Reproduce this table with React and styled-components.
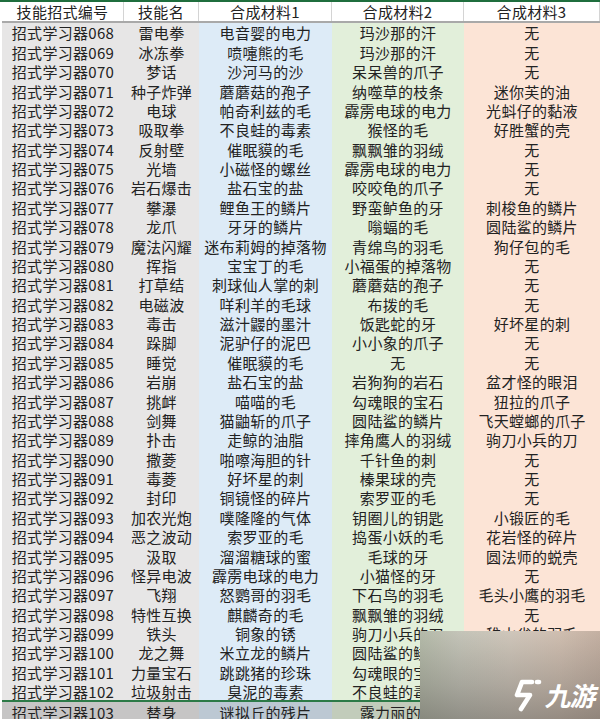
import React from 'react';
import styled, { createGlobalStyle } from 'styled-components';

const GlobalStyle = createGlobalStyle`
  html, body {
    margin: 0;
    padding: 0;
    background: #fff;
    overflow: hidden;
  }
  body {
    font-family: "Noto Sans CJK SC", "Noto Sans", sans-serif;
    color: #222;
  }
`;

const tones = {
  gray: '#e7e6e6',
  blue: '#ddebf7',
  green: '#e2efda',
  peach: '#fce4d6',
};

const selectedTones = {
  gray: '#c6c5c5',
  blue: '#bcc8d3',
  green: '#c2ccbb',
  peach: '#d6c3b8',
};

const Page = styled.div`
  position: relative;
  width: 600px;
  height: 719px;
  overflow: hidden;
  border-top: 2px solid #1f6e3d;
  box-sizing: border-box;
`;

const Sheet = styled.div`
  display: flex;
  flex-direction: column;
  border-left: 2px solid #fff;
  box-shadow: inset 1px 0 0 #b9b9b9;
`;

const Row = styled.div`
  display: grid;
  grid-template-columns: 122px 75px 133px 132px 136px;
  height: ${(p) => (p.$header ? '19.3px' : '19.38px')};
  ${(p) => p.$header && 'border-bottom: 2px solid #a9a9a9;'}
  ${(p) =>
    p.$selected &&
    'border-top: 2px solid #2c7a47; box-shadow: inset 0 1px 0 #fff; margin-top: -1px;'}
`;

const Cell = styled.div`
  display: flex;
  align-items: center;
  justify-content: center;
  white-space: nowrap;
  overflow: hidden;
  font-size: 15px;
  line-height: 1;
  letter-spacing: 0.3px;
  background: ${(p) =>
    p.$header ? '#fff' : p.$selected ? selectedTones[p.$tone] : tones[p.$tone]};
  ${(p) => p.$header && 'border-right: 1px solid #d4d4d4;'}
`;

const Watermark = styled.div`
  position: absolute;
  left: 420px;
  top: 629px;
  width: 180px;
  height: 90px;
  z-index: 2;
  background: linear-gradient(90deg, #b4baa9 0%, #c4c4b8 22%, #cfc6ba 50%, #cfbeb0 78%, #c4b0a2 100%);
  display: flex;
  align-items: flex-end;
  justify-content: flex-end;
  padding: 0 3px 8px 0;
  box-sizing: border-box;
`;

const Shade = styled.div`
  position: absolute;
  inset: 0;
  background: linear-gradient(180deg, rgba(100, 97, 92, 0) 0%, rgba(100, 97, 92, 0.3) 60%, rgba(90, 87, 82, 0.5) 100%);
`;

const Logo = styled.div`
  position: relative;
  display: flex;
  align-items: center;
  gap: 2px;
  color: #fff;
`;

const LogoText = styled.span`
  font-family: "Noto Sans CJK SC", sans-serif;
  font-size: 26px;
  font-weight: 700;
  letter-spacing: -1px;
  color: #fff;
  transform: skewX(-12deg);
`;

const headers = ['技能招式编号', '技能名', '合成材料1', '合成材料2', '合成材料3'];
const toneOrder = ['gray', 'gray', 'blue', 'green', 'peach'];

const rows = [
  ['068', '雷电拳', '电音婴的电力', '玛沙那的汗', '无'],
  ['069', '冰冻拳', '喷嚏熊的毛', '玛沙那的汗', '无'],
  ['070', '梦话', '沙河马的沙', '呆呆兽的爪子', '无'],
  ['071', '种子炸弹', '蘑蘑菇的孢子', '纳噬草的枝条', '迷你芙的油'],
  ['072', '电球', '帕奇利兹的毛', '霹雳电球的电力', '光蚪仔的黏液'],
  ['073', '吸取拳', '不良蛙的毒素', '猴怪的毛', '好胜蟹的壳'],
  ['074', '反射壁', '催眠貘的毛', '飘飘雏的羽绒', '无'],
  ['075', '光墙', '小磁怪的螺丝', '霹雳电球的电力', '无'],
  ['076', '岩石爆击', '盐石宝的盐', '咬咬龟的爪子', '无'],
  ['077', '攀瀑', '鲤鱼王的鳞片', '野蛮鲈鱼的牙', '刺梭鱼的鳞片'],
  ['078', '龙爪', '牙牙的鳞片', '嗡蝠的毛', '圆陆鲨的鳞片'],
  ['079', '魔法闪耀', '迷布莉姆的掉落物', '青绵鸟的羽毛', '狗仔包的毛'],
  ['080', '挥指', '宝宝丁的毛', '小福蛋的掉落物', '无'],
  ['081', '打草结', '刺球仙人掌的刺', '蘑蘑菇的孢子', '无'],
  ['082', '电磁波', '咩利羊的毛球', '布拨的毛', '无'],
  ['083', '毒击', '滋汁鼹的墨汁', '饭匙蛇的牙', '好坏星的刺'],
  ['084', '跺脚', '泥驴仔的泥巴', '小小象的爪子', '无'],
  ['085', '睡觉', '催眠貘的毛', '无', '无'],
  ['086', '岩崩', '盐石宝的盐', '岩狗狗的岩石', '盆才怪的眼泪'],
  ['087', '挑衅', '喵喵的毛', '勾魂眼的宝石', '狃拉的爪子'],
  ['088', '剑舞', '猫鼬斩的爪子', '圆陆鲨的鳞片', '飞天螳螂的爪子'],
  ['089', '扑击', '走鲸的油脂', '摔角鹰人的羽绒', '驹刀小兵的刀'],
  ['090', '撒菱', '啪嚓海胆的针', '千针鱼的刺', '无'],
  ['091', '毒菱', '好坏星的刺', '榛果球的壳', '无'],
  ['092', '封印', '铜镜怪的碎片', '索罗亚的毛', '无'],
  ['093', '加农光炮', '噗隆隆的气体', '钥圈儿的钥匙', '小锻匠的毛'],
  ['094', '恶之波动', '索罗亚的毛', '捣蛋小妖的毛', '花岩怪的碎片'],
  ['095', '汲取', '溜溜糖球的蜜', '毛球的牙', '圆法师的蜕壳'],
  ['096', '怪异电波', '霹雳电球的电力', '小猫怪的牙', '无'],
  ['097', '飞翔', '怒鹦哥的羽毛', '下石鸟的羽毛', '毛头小鹰的羽毛'],
  ['098', '特性互换', '麒麟奇的毛', '飘飘雏的羽绒', '无'],
  ['099', '铁头', '铜象的锈', '驹刀小兵的刀', '稚山雀的羽毛'],
  ['100', '龙之舞', '米立龙的鳞片', '圆陆鲨的鳞片', '无'],
  ['101', '力量宝石', '跳跳猪的珍珠', '勾魂眼的宝石', '无'],
  ['102', '垃圾射击', '臭泥的毒素', '不良蛙的毒素', '无'],
  ['103', '替身', '谜拟丘的残片', '露力丽的毛', '无'],
];

const NineLogo = () => (
  <svg width="36" height="34" viewBox="0 0 36 34" fill="none">
    <path
      d="M23 4 L13 4 L8 17 L21 17 L12 31"
      stroke="#fff"
      strokeWidth="4.6"
      strokeLinecap="round"
      strokeLinejoin="round"
    />
    <path d="M28 4 L30 4" stroke="#fff" strokeWidth="4.6" strokeLinecap="round" />
  </svg>
);

export default function App() {
  return (
    <>
      <GlobalStyle />
      <Page>
        <Sheet>
          <Row $header>
            {headers.map((h) => (
              <Cell key={h} $header>
                {h}
              </Cell>
            ))}
          </Row>
          {rows.map(([num, ...rest], i) => {
            const selected = i === rows.length - 1;
            const cells = ['招式学习器' + num, ...rest];
            return (
              <Row key={num} $selected={selected}>
                {cells.map((c, j) => (
                  <Cell key={j} $tone={toneOrder[j]} $selected={selected}>
                    {c}
                  </Cell>
                ))}
              </Row>
            );
          })}
        </Sheet>
        <Watermark>
          <Shade />
          <Logo>
            <NineLogo />
            <LogoText>九游</LogoText>
          </Logo>
        </Watermark>
      </Page>
    </>
  );
}
